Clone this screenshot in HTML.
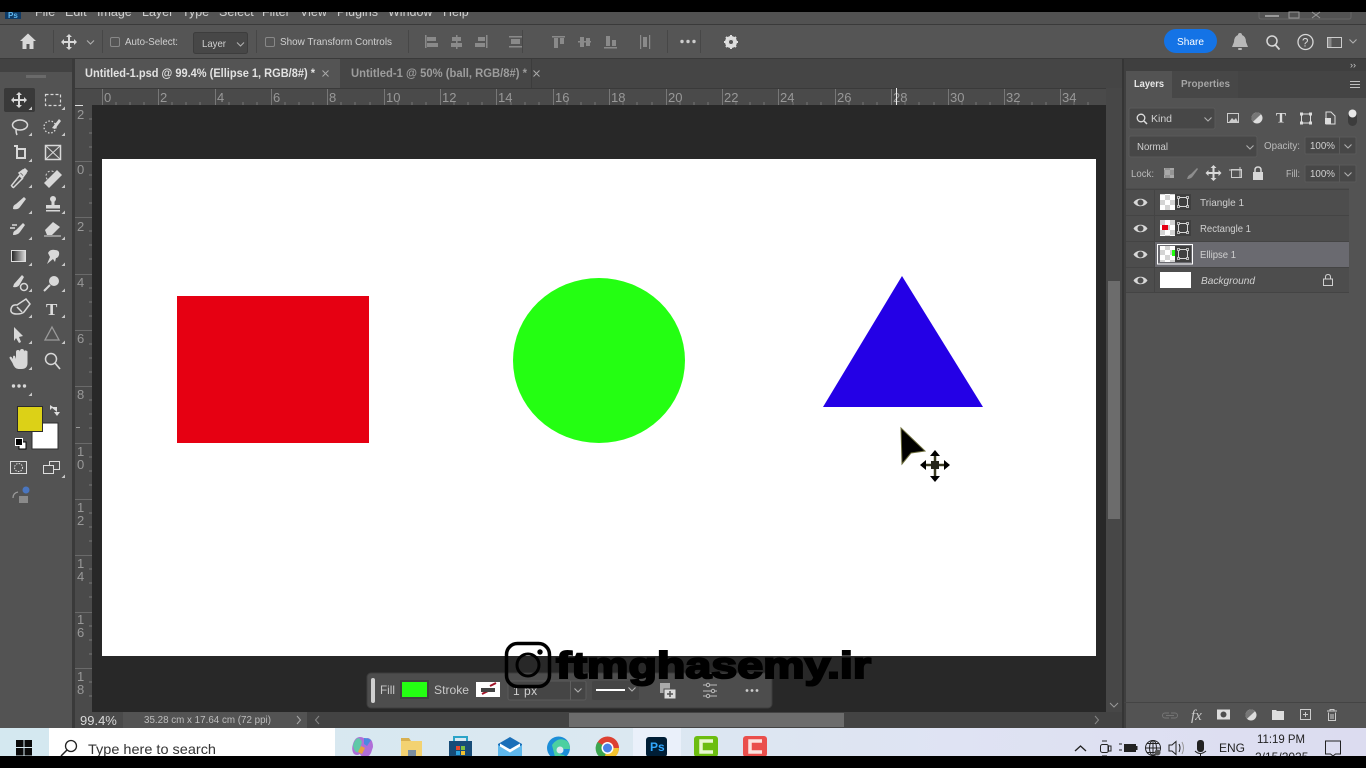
<!DOCTYPE html>
<html>
<head>
<meta charset="utf-8">
<title>Photoshop</title>
<style>
html,body{margin:0;padding:0;width:1366px;height:768px;overflow:hidden;background:#000}
svg{display:block;position:absolute;left:0;top:0}
text{font-family:"Liberation Sans",sans-serif;fill:#d0d0d0;font-size:11px}
.ic{fill:#d8d8d8;stroke:none}
.st{fill:none;stroke:#d8d8d8;stroke-width:1.5}
.dst{fill:none;stroke:#9a9a9a;stroke-width:1.3}
.r{fill:#989898;font-size:13px}
.m{fill:#cfcfcf;font-size:12.5px}
</style>
</head>
<body>
<svg width="1366" height="768" viewBox="0 0 1366 768" xmlns="http://www.w3.org/2000/svg">
<defs>
<linearGradient id="tb" x1="0" x2="1" y1="0" y2="0"><stop offset="0" stop-color="#d4e8f0"/><stop offset=".45" stop-color="#dbe8f1"/><stop offset=".7" stop-color="#dfe3f3"/><stop offset="1" stop-color="#dcdcf0"/></linearGradient>
<pattern id="ck" width="10" height="10" patternUnits="userSpaceOnUse"><rect width="10" height="10" fill="#fff"/><rect width="5" height="5" fill="#d4d4d4"/><rect x="5" y="5" width="5" height="5" fill="#d4d4d4"/></pattern>
<linearGradient id="gr" x1="0" x2="1" y1="0" y2="0"><stop offset="0" stop-color="#222"/><stop offset="1" stop-color="#ddd"/></linearGradient>
<g id="frm"><rect x="0" y="0" width="16" height="16" fill="#3f3f3f"/><rect x="3.500" y="3.500" width="9" height="9" fill="none" stroke="#d8d8d8" stroke-width="1"/><rect x="2.500" y="2.500" width="2" height="2" fill="#3f3f3f" stroke="#d8d8d8" stroke-width=".8"/><rect x="11.500" y="2.500" width="2" height="2" fill="#3f3f3f" stroke="#d8d8d8" stroke-width=".8"/><rect x="2.500" y="11.500" width="2" height="2" fill="#3f3f3f" stroke="#d8d8d8" stroke-width=".8"/><rect x="11.500" y="11.500" width="2" height="2" fill="#3f3f3f" stroke="#d8d8d8" stroke-width=".8"/></g>
<path id="eye" d="M-7 0C-4-5 4-5 7 0C4 5-4 5-7 0Z M0-3A3 3 0 1 0 0 3A3 3 0 1 0 0-3Z" fill="#d8d8d8" fill-rule="evenodd"/>
<path id="mv" d="M0-8l3 3h-2v4h4v-2l3 3-3 3v-2h-4v4h2l-3 3-3-3h2v-4h-4v2l-3-3 3-3v2h4v-4h-2z" fill="#d8d8d8"/>
<path id="cv" d="M-3.500-1.500L0 2L3.500-1.500" fill="none" stroke="#b0b0b0" stroke-width="1.100"/>
<path id="tri" d="M0 0h-3.500l3.500-3.500z" fill="#c8c8c8"/>
</defs>

<rect width="1366" height="768" fill="#535353"/>
<rect width="1366" height="12" fill="#000"/>

<!-- menu bar -->
<rect x="0" y="12" width="1366" height="12" fill="#525252"/>
<rect x="0" y="24" width="1366" height="1.500" fill="#3a3a3a"/>
<rect x="5" y="12" width="16" height="7" fill="#0e3a66"/>
<text x="8" y="18" style="font-size:8px;fill:#5fb8f0;font-weight:bold">Ps</text>
<clipPath id="cpm"><rect x="0" y="12" width="1366" height="12"/></clipPath>
<g clip-path="url(#cpm)">
<text x="35" y="16" class="m">File</text><text x="65" y="16" class="m">Edit</text><text x="97" y="16" class="m">Image</text><text x="142" y="16" class="m">Layer</text><text x="182" y="16" class="m">Type</text><text x="219" y="16" class="m">Select</text><text x="262" y="16" class="m">Filter</text><text x="300" y="16" class="m">View</text><text x="337" y="16" class="m">Plugins</text><text x="388" y="16" class="m">Window</text><text x="443" y="16" class="m">Help</text>
</g>
<rect x="1265" y="15" width="14" height="2" fill="#999"/>
<rect x="1289" y="12" width="10" height="6" fill="none" stroke="#999"/>
<path d="M1312 12l8 6M1320 12l-8 6" stroke="#999" fill="none"/>
<path d="M1259 12v5q0 2 2 2h88q2 0 2-2v-5" fill="none" stroke="#666"/>

<!-- options bar -->
<rect x="0" y="25" width="1366" height="33" fill="#555"/>
<rect x="0" y="58" width="1366" height="1" fill="#3a3a3a"/>
<path d="M28 33.500L36 41h-2.500v8h-4v-5h-3v5h-4v-8H20z" class="ic"/>
<rect x="53" y="30" width="1" height="23" fill="#474747"/>
<use href="#mv" x="69" y="42"/>
<use href="#cv" x="90.500" y="42"/>
<rect x="102" y="30" width="1" height="23" fill="#474747"/>
<rect x="110.500" y="37.500" width="9" height="9" rx="1.500" fill="none" stroke="#888"/>
<text x="125" y="45" style="font-size:10.500px" textLength="53" lengthAdjust="spacingAndGlyphs">Auto-Select:</text>
<rect x="193.500" y="32.500" width="54" height="21" rx="2" fill="#474747" stroke="#3d3d3d"/>
<text x="202" y="47" style="font-size:10.500px" textLength="24" lengthAdjust="spacingAndGlyphs">Layer</text>
<use href="#cv" x="240.500" y="44"/>
<rect x="256" y="30" width="1" height="23" fill="#474747"/>
<rect x="265.500" y="37.500" width="9" height="9" rx="1.500" fill="none" stroke="#888"/>
<text x="280" y="45" style="font-size:10.500px" textLength="112" lengthAdjust="spacingAndGlyphs">Show Transform Controls</text>
<rect x="408" y="30" width="1" height="23" fill="#474747"/>
<g fill="#8a8a8a">
<rect x="425" y="35" width="1.500" height="13"/><rect x="427" y="37" width="9" height="4"/><rect x="427" y="43" width="11" height="4"/>
<rect x="456" y="35" width="1.500" height="14"/><rect x="452" y="37" width="9" height="4"/><rect x="451" y="43" width="11" height="4"/>
<rect x="486" y="35" width="1.500" height="13"/><rect x="478" y="37" width="7" height="4"/><rect x="475" y="43" width="10" height="4"/>
<rect x="509" y="36" width="13" height="1.500"/><rect x="509" y="46" width="13" height="1.500"/><rect x="511" y="39" width="9" height="5"/>
<rect x="552" y="36" width="13" height="1.500"/><rect x="554" y="38" width="4" height="10"/><rect x="560" y="38" width="4" height="6"/>
<rect x="578" y="41" width="13" height="1.500"/><rect x="580" y="37" width="4" height="10"/><rect x="586" y="38" width="4" height="8"/>
<rect x="604" y="47" width="13" height="1.500"/><rect x="606" y="36" width="4" height="10"/><rect x="612" y="40" width="4" height="6"/>
<rect x="640" y="35" width="1.200" height="14"/><rect x="643" y="37" width="4" height="10"/><rect x="649" y="35" width="1.200" height="14"/>
</g>
<rect x="522" y="30" width="1" height="23" fill="#474747"/>
<rect x="667" y="30" width="1" height="23" fill="#474747"/>
<rect x="700" y="30" width="1" height="23" fill="#474747"/>
<circle cx="682" cy="41.500" r="1.700" fill="#ccc"/><circle cx="688" cy="41.500" r="1.700" fill="#ccc"/><circle cx="694" cy="41.500" r="1.700" fill="#ccc"/>
<circle cx="731" cy="42" r="4.500" fill="none" stroke="#ddd" stroke-width="3"/>
<path d="M731 35v14M724 42h14M726 37l10 10M736 37l-10 10" stroke="#ddd" stroke-width="2"/>
<circle cx="731" cy="42" r="2" fill="#555"/>
<rect x="1164" y="29" width="53" height="24" rx="12" fill="#1473e6"/>
<text x="1177" y="45" style="font-size:10.500px;fill:#fff" textLength="27" lengthAdjust="spacingAndGlyphs">Share</text>
<path d="M1240 33q2 0 2 2q4 1.500 4 7l2 5h-16l2-5q0-5.500 4-7q0-2 2-2z" fill="#b8b8b8"/><rect x="1238" y="48" width="4" height="2" rx="1" fill="#b8b8b8"/>
<circle cx="1272" cy="41" r="5" fill="none" stroke="#d8d8d8" stroke-width="1.500"/><path d="M1275.500 45l4 4.500" stroke="#d8d8d8" stroke-width="1.700"/>
<circle cx="1305.500" cy="42" r="7.500" fill="none" stroke="#d8d8d8" stroke-width="1.300"/><text x="1302" y="46.500" style="font-size:11.500px;fill:#ddd">?</text>
<rect x="1327.500" y="37.500" width="14" height="10" fill="none" stroke="#ccc"/><rect x="1328" y="38" width="3.500" height="9" fill="#888"/>
<use href="#cv" x="1353" y="41"/>

<!-- tab row -->
<rect x="0" y="59" width="1124" height="29" fill="#454545"/>
<rect x="0" y="59" width="74" height="13" fill="#3f3f3f"/>
<text x="6" y="68" style="font-size:9px;fill:#bbb">‹‹</text>
<rect x="75" y="59" width="265" height="29" fill="#545454"/>
<text x="85" y="77" style="font-weight:bold;font-size:11.500px;fill:#e2e2e2" textLength="230" lengthAdjust="spacingAndGlyphs">Untitled-1.psd @ 99.4% (Ellipse 1, RGB/8#) *</text>
<path d="M322.500 70.500l6 6M328.500 70.500l-6 6" stroke="#aaa"/>
<rect x="340" y="59" width="191" height="29" fill="#464646"/>
<text x="351" y="77" style="font-weight:bold;font-size:11.500px;fill:#9c9c9c" textLength="176" lengthAdjust="spacingAndGlyphs">Untitled-1 @ 50% (ball, RGB/8#) *</text>
<path d="M533.500 70.500l6 6M539.500 70.500l-6 6" stroke="#aaa"/>
<rect x="531" y="59" width="1" height="29" fill="#3c3c3c"/>

<!-- left toolbar -->
<rect x="0" y="72" width="72" height="656" fill="#535353"/>
<rect x="0" y="59" width="72" height="13" fill="#424242"/>
<rect x="72" y="59" width="3" height="669" fill="#3a3a3a"/>
<rect x="26" y="75" width="20" height="3" fill="#6a6a6a"/>
<rect x="4" y="88" width="31" height="24" rx="2" fill="#393939"/>
<use href="#mv" x="19" y="100"/>
<rect x="45.500" y="94.500" width="15" height="11" fill="none" stroke="#d8d8d8" stroke-dasharray="3 2" stroke-width="1.200"/>
<ellipse cx="20" cy="125" rx="7.500" ry="5" class="st"/><path d="M16 130q0 3 1 5" class="st"/>
<ellipse cx="50" cy="127" rx="6" ry="6" fill="none" stroke="#d8d8d8" stroke-dasharray="1.500 1.800" stroke-width="1.300"/><path d="M52 128l7-9 2 2-6 8z" class="ic"/>
<path d="M14 146h3v12h9M17 149h8v10" fill="none" stroke="#d8d8d8" stroke-width="2"/>
<rect x="45.500" y="145.500" width="15" height="14" class="st"/><path d="M45.500 145.500l15 14M60.500 145.500l-15 14" stroke="#d8d8d8"/>
<path d="M12.500 187l-1-1.500 8-10 3 3-9 9zM19 173l4-3 3 3-3 4z" class="st"/><path d="M20 172l5-4 3 3-4 5z" class="ic"/>
<path d="M44 183l13-13 5 5-13 13z" class="ic"/><circle cx="51" cy="176" r="5" fill="none" stroke="#d8d8d8" stroke-dasharray="2 2"/>
<path d="M13 209q0-4 3-5l8-7 2 2-6 8q-2 3-7 2z" class="ic"/>
<circle cx="53" cy="199" r="3" class="ic"/><rect x="51.500" y="201" width="3" height="4" class="ic"/><rect x="46" y="205" width="14" height="3.500" class="ic"/><rect x="46" y="210" width="14" height="1.500" class="ic"/>
<path d="M13 235q0-4 3-5l7-7 2 2-5 7q-2 3-7 3z" class="ic"/><path d="M10 228h5M12 225h5" stroke="#d8d8d8" stroke-width="1.500"/>
<path d="M45 230l8-8 7 5-8 8h-5z" class="ic"/><path d="M44 236h17" stroke="#d8d8d8"/>
<rect x="11.500" y="250.500" width="14" height="11" fill="url(#gr)" stroke="#ddd"/>
<path d="M47 264l3-7-2-4q2-4 7-3 5 0 4 5-1 3-3 3l-1 4-2-3z" class="ic"/>
<path d="M13 287l1-3 8-9 2 2-4 7q-2 4-7 3z" class="ic"/><circle cx="24" cy="287" r="3.500" class="st"/>
<circle cx="54" cy="281" r="5" class="ic"/><path d="M50 285l-6 6" stroke="#d8d8d8" stroke-width="2"/>
<path d="M17 314q-7 0-6-5t6-4l9-6 4 5-6 8q-2 2-7 2z" class="st"/><path d="M17 307l5 5" class="st"/>
<text x="46" y="315" style="font-family:'Liberation Serif',serif;font-weight:bold;font-size:17px;fill:#ddd">T</text>
<path d="M14 327l9 9-4 1 2 5-2 1-3-5-2 3z" class="ic"/>
<path d="M52 327l7 13H45z" class="dst"/>
<path d="M14 356v-2q0-2 2-1l1 3v-7q0-2 2-2t2 2v5-6q0-2 2-2t2 2v6-5q0-2 2-1.500t1.500 2V360q0 6-6 6h-3q-4 0-6-6l-3-5q0-2 2-1z" class="ic" transform="translate(-1 3)"/>
<circle cx="51" cy="359" r="5.500" class="st"/><path d="M55 363l5 6" stroke="#d8d8d8" stroke-width="1.700"/>
<circle cx="13.500" cy="386" r="1.700" class="ic"/><circle cx="19" cy="386" r="1.700" class="ic"/><circle cx="24.500" cy="386" r="1.700" class="ic"/>
<g>
<use href="#tri" x="32" y="110"/><use href="#tri" x="65" y="110"/><use href="#tri" x="32" y="136"/><use href="#tri" x="65" y="136"/><use href="#tri" x="32" y="162"/><use href="#tri" x="65" y="188"/><use href="#tri" x="32" y="188"/><use href="#tri" x="32" y="214"/><use href="#tri" x="65" y="214"/><use href="#tri" x="32" y="240"/><use href="#tri" x="65" y="240"/><use href="#tri" x="32" y="266"/><use href="#tri" x="65" y="266"/><use href="#tri" x="32" y="292"/><use href="#tri" x="65" y="292"/><use href="#tri" x="32" y="318"/><use href="#tri" x="65" y="318"/><use href="#tri" x="32" y="344"/><use href="#tri" x="65" y="344"/><use href="#tri" x="32" y="370"/><use href="#tri" x="32" y="396"/>
</g>
<rect x="32" y="423" width="26" height="26" fill="#fff" stroke="#2c2c2c"/>
<rect x="17.500" y="406.500" width="25" height="25" fill="#dcd117" stroke="#2c2c2c"/>
<path d="M51 407h6v5M57 416l-3-4h6zM50 405l3 2-3 3z" fill="#ddd" stroke="none"/>
<rect x="19" y="442" width="7" height="7" fill="#fff" stroke="#000"/><rect x="15.500" y="438.500" width="7" height="7" fill="#000" stroke="#fff"/>
<rect x="10.500" y="461.500" width="16" height="12" fill="none" stroke="#ddd"/><circle cx="18.500" cy="467.500" r="4" fill="none" stroke="#ddd" stroke-dasharray="1.500 1.200"/>
<rect x="49.500" y="461.500" width="10" height="8" fill="#535353" stroke="#ddd"/><rect x="43.500" y="465.500" width="10" height="8" fill="#535353" stroke="#ddd"/>
<use href="#tri" x="65" y="478"/>
<circle cx="26" cy="490" r="3.500" fill="#4a76c0"/><path d="M13 498q0-5 5-6" class="dst"/><rect x="19" y="496" width="9" height="7" fill="#8a8a8a"/>

<!-- rulers -->
<rect x="75" y="88" width="1031" height="17" fill="#4a4a4a"/>
<rect x="75" y="88" width="1031" height="1" fill="#3a3a3a"/>
<rect x="75" y="105" width="17" height="607" fill="#4a4a4a"/>
<g fill="#777">
<rect x="102" y="89" width="1" height="16"/><rect x="158" y="89" width="1" height="16"/><rect x="215" y="89" width="1" height="16"/><rect x="271" y="89" width="1" height="16"/><rect x="327" y="89" width="1" height="16"/><rect x="384" y="89" width="1" height="16"/><rect x="440" y="89" width="1" height="16"/><rect x="496" y="89" width="1" height="16"/><rect x="553" y="89" width="1" height="16"/><rect x="609" y="89" width="1" height="16"/><rect x="666" y="89" width="1" height="16"/><rect x="722" y="89" width="1" height="16"/><rect x="778" y="89" width="1" height="16"/><rect x="835" y="89" width="1" height="16"/><rect x="891" y="89" width="1" height="16"/><rect x="948" y="89" width="1" height="16"/><rect x="1004" y="89" width="1" height="16"/><rect x="1060" y="89" width="1" height="16"/>
</g>
<path d="M116 102V105M130 102V105M144 102V105M172 102V105M186 102V105M200 102V105M229 102V105M243 102V105M257 102V105M285 102V105M299 102V105M313 102V105M341 102V105M355 102V105M370 102V105M398 102V105M412 102V105M426 102V105M454 102V105M468 102V105M482 102V105M511 102V105M525 102V105M539 102V105M567 102V105M581 102V105M595 102V105M623 102V105M637 102V105M652 102V105M680 102V105M694 102V105M708 102V105M736 102V105M750 102V105M764 102V105M793 102V105M807 102V105M821 102V105M849 102V105M863 102V105M877 102V105M905 102V105M919 102V105M934 102V105M962 102V105M976 102V105M990 102V105M1018 102V105M1032 102V105M1046 102V105M1074 102V105M1088 102V105" stroke="#777" stroke-width="1"/>
<text x="104" y="102" class="r">0</text><text x="160" y="102" class="r">2</text><text x="217" y="102" class="r">4</text><text x="273" y="102" class="r">6</text><text x="329" y="102" class="r">8</text><text x="386" y="102" class="r">10</text><text x="442" y="102" class="r">12</text><text x="498" y="102" class="r">14</text><text x="555" y="102" class="r">16</text><text x="611" y="102" class="r">18</text><text x="668" y="102" class="r">20</text><text x="724" y="102" class="r">22</text><text x="780" y="102" class="r">24</text><text x="837" y="102" class="r">26</text><text x="893" y="102" class="r">28</text><text x="950" y="102" class="r">30</text><text x="1006" y="102" class="r">32</text><text x="1062" y="102" class="r">34</text>
<rect x="896" y="88" width="1" height="17" fill="#eee"/>
<path d="M1109 99l4-4 4 4" fill="none" stroke="#999"/>
<rect x="75" y="105" width="8" height="1" fill="#ddd"/>
<g fill="#6a6a6a">
<rect x="75" y="161" width="17" height="1"/><rect x="75" y="217" width="17" height="1"/><rect x="75" y="274" width="17" height="1"/><rect x="75" y="330" width="17" height="1"/><rect x="75" y="386" width="17" height="1"/><rect x="75" y="443" width="17" height="1"/><rect x="75" y="499" width="17" height="1"/><rect x="75" y="555" width="17" height="1"/><rect x="75" y="612" width="17" height="1"/><rect x="75" y="668" width="17" height="1"/>
</g>
<path d="M89 119H92M89 133H92M89 147H92M89 175H92M89 189H92M89 203H92M89 231H92M89 245H92M89 259H92M89 288H92M89 302H92M89 316H92M89 344H92M89 358H92M89 372H92M89 400H92M89 414H92M89 428H92M89 457H92M89 471H92M89 485H92M89 513H92M89 527H92M89 541H92M89 569H92M89 583H92M89 597H92M89 626H92M89 640H92M89 654H92M89 682H92M89 696H92" stroke="#777"/>
<text x="77" y="119" class="r">2</text><text x="77" y="174" class="r">0</text><text x="77" y="231" class="r">2</text><text x="77" y="287" class="r">4</text><text x="77" y="343" class="r">6</text><text x="77" y="399" class="r">8</text><text x="77" y="456" class="r">1</text><text x="77" y="469" class="r">0</text><text x="77" y="512" class="r">1</text><text x="77" y="525" class="r">2</text><text x="77" y="568" class="r">1</text><text x="77" y="581" class="r">4</text><text x="77" y="624" class="r">1</text><text x="77" y="637" class="r">6</text><text x="77" y="681" class="r">1</text><text x="77" y="694" class="r">8</text>
<rect x="76" y="427" width="4" height="1" fill="#989898"/>

<!-- canvas -->
<rect x="92" y="105" width="1014" height="607" fill="#282828"/>
<rect x="102" y="159" width="994" height="497" fill="#fff"/>
<rect x="177" y="296" width="192" height="147" fill="#e60012"/>
<ellipse cx="599" cy="360.500" rx="86" ry="82.500" fill="#24ff12"/>
<path d="M902 276L983 407H823Z" fill="#2400e6"/>

<!-- cursor -->
<path d="M901 428L925 451 911 453 902 464Z" fill="#000" stroke="#6b6b3a" stroke-width="1"/>
<path d="M935 452v26M924 465h22" stroke="#3a3a20" stroke-width="2.500"/>
<path d="M935 450l5 6h-10zM935 482l5-6h-10zM920 465l6-5v10zM950 465l-6-5v10z" fill="#000"/>
<rect x="931" y="461" width="8" height="8" fill="#26261a"/>

<!-- right scrollbar -->
<rect x="1106" y="88" width="16" height="624" fill="#474747"/>
<rect x="1108" y="281" width="12" height="238" fill="#6c6c6c"/>
<path d="M1110 703l4 4 4-4" fill="none" stroke="#999"/>
<rect x="1122" y="59" width="2" height="669" fill="#353535"/>

<!-- contextual bar -->
<rect x="367" y="673" width="405" height="35" rx="4" fill="#4d4d4d" stroke="#3d3d3d"/>
<rect x="371" y="678" width="4" height="25" rx="2" fill="#cfcfcf"/>
<text x="380" y="694" style="font-size:12px;fill:#c8c8c8" textLength="15" lengthAdjust="spacingAndGlyphs">Fill</text>
<rect x="400" y="680" width="29" height="19" fill="#404040"/>
<rect x="402" y="682" width="25" height="15" fill="#24ff12"/>
<text x="434" y="694" style="font-size:12px;fill:#c8c8c8" textLength="35" lengthAdjust="spacingAndGlyphs">Stroke</text>
<rect x="476" y="682" width="24" height="15" fill="#fff"/>
<path d="M482 694l6-3M490 686l6-3" stroke="#a01428" stroke-width="2"/><rect x="481" y="688" width="14" height="4" fill="#444"/>
<rect x="508" y="681" width="78" height="19" rx="2" fill="#454545" stroke="#5a5a5a"/>
<text x="513" y="695" style="font-size:12px;fill:#cfcfcf;letter-spacing:.5px">1 px</text>
<rect x="570" y="681" width="1" height="19" fill="#5f5f5f"/>
<use href="#cv" x="578" y="690"/>
<rect x="592" y="681" width="47" height="19" rx="2" fill="#454545"/>
<rect x="596" y="689" width="29" height="2" fill="#fff"/>
<use href="#cv" x="632" y="689"/>
<rect x="660" y="683" width="10" height="10" fill="#aaa"/>
<rect x="664" y="689" width="12" height="10" fill="#ddd" stroke="#4d4d4d"/><path d="M670 691v6M667 694h6" stroke="#555" stroke-width="1.500"/>
<path d="M703 685h14M703 691h14M703 696h14" stroke="#bbb"/><circle cx="708" cy="685" r="1.700" fill="#4d4d4d" stroke="#bbb"/><circle cx="713" cy="691" r="1.700" fill="#4d4d4d" stroke="#bbb"/><circle cx="708" cy="696" r="1.700" fill="#4d4d4d" stroke="#bbb"/>
<circle cx="747" cy="690.500" r="1.400" fill="#ccc"/><circle cx="752" cy="690.500" r="1.400" fill="#ccc"/><circle cx="757" cy="690.500" r="1.400" fill="#ccc"/>

<!-- watermark -->
<rect x="506.500" y="643.500" width="43" height="43" rx="11" fill="none" stroke="#000" stroke-width="3.500"/>
<circle cx="528" cy="665" r="11" fill="none" stroke="#000" stroke-width="3"/>
<circle cx="540" cy="652" r="2.700" fill="#000"/>
<text x="556" y="678" textLength="315" lengthAdjust="spacingAndGlyphs" style="font-weight:bold;font-size:37px;fill:#000;stroke:#000;stroke-width:2px">ftmghasemy.ir</text>

<!-- status bar -->
<rect x="75" y="712" width="232" height="16" fill="#535353"/>
<rect x="75" y="712" width="48" height="16" fill="#4a4a4a"/>
<text x="80" y="725" style="font-size:13px;fill:#d8d8d8">99.4%</text>
<text x="144" y="723" style="font-size:10px;fill:#bdbdbd" textLength="127" lengthAdjust="spacingAndGlyphs">35.28 cm x 17.64 cm (72 ppi)</text>
<path d="M297 716l3.500 4-3.500 4" fill="none" stroke="#aaa"/>
<rect x="307" y="712" width="815" height="16" fill="#434343"/>
<path d="M319 716l-3.500 4 3.500 4" fill="none" stroke="#888"/>
<rect x="569" y="713" width="275" height="14" fill="#6c6c6c"/>
<path d="M1095 716l3.500 4-3.500 4" fill="none" stroke="#888"/>

<!-- right panel -->
<rect x="1124" y="59" width="242" height="669" fill="#535353"/>
<rect x="1124" y="59" width="242" height="12" fill="#3f3f3f"/>
<rect x="1124" y="71" width="242" height="27" fill="#444"/>
<text x="1350" y="68" style="font-size:9px;fill:#ccc">››</text>
<rect x="1172" y="71" width="66" height="27" fill="#474747"/>
<rect x="1126" y="71" width="46" height="27" fill="#535353"/>
<text x="1134" y="87" style="font-weight:bold;font-size:10.500px;fill:#e8e8e8" textLength="30" lengthAdjust="spacingAndGlyphs">Layers</text>
<text x="1181" y="87" style="font-weight:bold;font-size:10.500px;fill:#a5a5a5" textLength="49" lengthAdjust="spacingAndGlyphs">Properties</text>
<path d="M1350 81.500h10M1350 84.500h10M1350 87.500h10" stroke="#c0c0c0"/>
<rect x="1124" y="71" width="2" height="657" fill="#3f3f3f"/>
<!-- filter row -->
<rect x="1129" y="108" width="86" height="21" rx="2" fill="#474747" stroke="#5a5a5a"/>
<circle cx="1141" cy="118" r="3.800" fill="none" stroke="#ddd" stroke-width="1.300"/><path d="M1144 121l3 3" stroke="#ddd" stroke-width="1.500"/>
<text x="1151" y="122" style="font-size:10.500px">Kind</text>
<use href="#cv" x="1208" y="119"/>
<rect x="1227.500" y="113.500" width="11" height="9" fill="none" stroke="#ccc"/><path d="M1229 122l3-4 2 2 2-2 2 4z" fill="#ccc"/>
<circle cx="1257" cy="118" r="5.500" fill="#ddd"/><path d="M1261 114.200A5.500 5.500 0 0 0 1253 121.800Z" fill="#777"/>
<text x="1276" y="122.500" style="font-family:'Liberation Serif',serif;font-weight:bold;font-size:15px;fill:#ddd">T</text>
<rect x="1301.500" y="114" width="9" height="9" fill="none" stroke="#ddd"/>
<rect x="1300" y="112.500" width="3" height="3" fill="#ddd"/><rect x="1309" y="112.500" width="3" height="3" fill="#ddd"/><rect x="1300" y="121.500" width="3" height="3" fill="#ddd"/><rect x="1309" y="121.500" width="3" height="3" fill="#ddd"/>
<path d="M1326 112h5l4 4v8h-9z" fill="none" stroke="#ddd"/><rect x="1325" y="118" width="6" height="6" fill="#ddd"/>
<rect x="1348" y="110" width="9" height="16" rx="4.500" fill="#3c3c3c"/><circle cx="1352.500" cy="113.500" r="4" fill="#e8e8e8"/>
<!-- blend row -->
<rect x="1129" y="136" width="128" height="21" rx="2" fill="#474747" stroke="#5a5a5a"/>
<text x="1137" y="150" style="font-size:10.500px" textLength="31" lengthAdjust="spacingAndGlyphs">Normal</text>
<use href="#cv" x="1250" y="147"/>
<text x="1264" y="149" style="font-size:10.500px;fill:#bbb" textLength="36" lengthAdjust="spacingAndGlyphs">Opacity:</text>
<rect x="1305" y="137" width="51" height="17" rx="1" fill="#474747" stroke="#5a5a5a"/>
<rect x="1339" y="137" width="1" height="17" fill="#5a5a5a"/>
<text x="1310" y="149" style="font-size:10.500px" textLength="25" lengthAdjust="spacingAndGlyphs">100%</text>
<use href="#cv" x="1348" y="146"/>
<!-- lock row -->
<text x="1131" y="177" style="font-size:10.500px;fill:#bbb" textLength="23" lengthAdjust="spacingAndGlyphs">Lock:</text>
<rect x="1164" y="168" width="10" height="10" fill="url(#ck)" opacity=".5"/>
<path d="M1187 179q1-4 4-5l6-6 1 1-5 7q-2 3-6 3z" fill="#8d8d8d"/>
<use href="#mv" x="1213.500" y="173"/>
<rect x="1231.500" y="169.500" width="10" height="8" fill="none" stroke="#ccc"/><path d="M1229 170h12M1240 167v11" stroke="#ccc"/>
<rect x="1253" y="172" width="10" height="8" fill="#d8d8d8"/><path d="M1255 172v-2q0-3 3-3t3 3v2" fill="none" stroke="#d8d8d8" stroke-width="1.500"/>
<text x="1286" y="177" style="font-size:10.500px;fill:#bbb" textLength="14" lengthAdjust="spacingAndGlyphs">Fill:</text>
<rect x="1305" y="165" width="51" height="17" rx="1" fill="#474747" stroke="#5a5a5a"/>
<rect x="1339" y="165" width="1" height="17" fill="#5a5a5a"/>
<text x="1310" y="177" style="font-size:10.500px" textLength="25" lengthAdjust="spacingAndGlyphs">100%</text>
<use href="#cv" x="1348" y="174"/>
<!-- layers -->
<rect x="1126" y="188" width="223" height="104" fill="#4d4d4d"/>
<rect x="1126" y="189" width="223" height="1" fill="#444"/>
<rect x="1126" y="215" width="223" height="1" fill="#444"/>
<rect x="1155" y="241" width="194" height="26" fill="#6a6a70"/>
<rect x="1126" y="241" width="223" height="1" fill="#444"/>
<rect x="1126" y="267" width="223" height="1" fill="#444"/>
<rect x="1126" y="292" width="223" height="1" fill="#444"/>
<rect x="1154" y="189" width="1" height="104" fill="#444"/>
<use href="#eye" x="1140.500" y="202.500"/><use href="#eye" x="1140.500" y="228.500"/><use href="#eye" x="1140.500" y="254.500"/><use href="#eye" x="1140.500" y="280.500"/>
<rect x="1160" y="194" width="16" height="16" fill="url(#ck)"/><use href="#frm" x="1175" y="194"/>
<rect x="1160" y="220" width="16" height="16" fill="url(#ck)"/><rect x="1162" y="225" width="6" height="5" fill="#e60012"/><use href="#frm" x="1175" y="220"/>
<rect x="1157.500" y="244.500" width="35" height="19.500" fill="none" stroke="#fff"/>
<rect x="1160" y="246" width="16" height="16" fill="url(#ck)"/><rect x="1172" y="250" width="3" height="6" fill="#24ff12"/><use href="#frm" x="1175" y="246"/>
<rect x="1160" y="272" width="31" height="16" fill="#fff"/>
<text x="1200" y="206" style="font-size:10.500px" textLength="44" lengthAdjust="spacingAndGlyphs">Triangle 1</text>
<text x="1200" y="232" style="font-size:10.500px" textLength="51" lengthAdjust="spacingAndGlyphs">Rectangle 1</text>
<text x="1200" y="258" style="font-size:10.500px" textLength="36" lengthAdjust="spacingAndGlyphs">Ellipse 1</text>
<text x="1201" y="284" style="font-size:10.500px;font-style:italic" textLength="54" lengthAdjust="spacingAndGlyphs">Background</text>
<rect x="1323.500" y="279" width="9" height="6.500" fill="none" stroke="#d0d0d0"/><path d="M1325.500 279v-2q0-2.500 2.500-2.500t2.500 2.500v2" fill="none" stroke="#d0d0d0"/>
<!-- bottom panel icons -->
<rect x="1124" y="702" width="242" height="1" fill="#444"/>
<path d="M1169 713h-4a2.500 2.500 0 0 0 0 5h4M1171 713h4a2.500 2.500 0 0 1 0 5h-4M1166 715.500h8" fill="none" stroke="#757575"/>
<text x="1191" y="720" style="font-family:'Liberation Serif',serif;font-style:italic;font-size:15px;fill:#c8c8c8">fx</text>
<rect x="1217" y="709.500" width="13" height="10" fill="#ddd"/><circle cx="1223.500" cy="714.500" r="3" fill="#4f4f4f"/>
<circle cx="1251" cy="715" r="5.500" fill="#ddd"/><path d="M1255 711.200A5.500 5.500 0 0 0 1247 718.800Z" fill="#777"/>
<path d="M1272 710h4l1 1h7v9h-12z" fill="#ddd"/>
<rect x="1300.500" y="709.500" width="10" height="10" fill="none" stroke="#ccc"/><path d="M1305.500 712v5M1303 714.500h5" stroke="#ccc"/>
<path d="M1327 711h10M1330 711v-1.500h4V711M1328.500 712.500v8h7v-8M1331 714v5M1333 714v5" fill="none" stroke="#ccc"/>

<!-- taskbar -->
<rect x="0" y="728" width="1366" height="28" fill="url(#tb)"/>
<g fill="#0a0a0a"><rect x="16" y="740" width="7.500" height="7"/><rect x="24.500" y="740" width="7.500" height="7"/><rect x="16" y="748" width="7.500" height="7.500"/><rect x="24.500" y="748" width="7.500" height="7.500"/></g>
<rect x="49" y="728" width="286" height="28" fill="#fff"/>
<circle cx="71" cy="746" r="5.500" fill="none" stroke="#222" stroke-width="1.300"/><path d="M67 750l-6 6" stroke="#222" stroke-width="1.500"/>
<text x="88" y="754" style="font-size:14px;fill:#333" textLength="128" lengthAdjust="spacingAndGlyphs">Type here to search</text>
<clipPath id="tbc"><rect x="340" y="728" width="1026" height="28"/></clipPath>
<g clip-path="url(#tbc)">
<path d="M353 744q2-7 7-7 3 0 5 2 3-2 5 0 3 2 3 8l-2 6q-2 4-6 4-4 0-5-3-3 2-6 0-3-4-1-10z" fill="#b06ed8"/><path d="M353 746q1-6 5-8 2 0 4 4l-3 10q-4 2-6-6z" fill="#5fc8a8"/><path d="M358 752l3-6 4 2-3 6z" fill="#e8a040"/><path d="M364 738q4 0 7 2l-4 6-3-2z" fill="#4a8ae0"/>
<rect x="401" y="741" width="21" height="15" fill="#f3d271"/><path d="M401 741v-3h8l2 3z" fill="#d8b050"/><rect x="408" y="750" width="8" height="6" fill="#7a8ea0"/>
<rect x="449" y="741" width="23" height="16" fill="#174c78"/><path d="M454 741v-4h13v4" fill="none" stroke="#2ba4c8" stroke-width="2"/><rect x="456" y="746" width="4" height="4" fill="#e8482c"/><rect x="461" y="746" width="4" height="4" fill="#7dc040"/><rect x="456" y="751" width="4" height="4" fill="#2ba4e0"/><rect x="461" y="751" width="4" height="4" fill="#f0c030"/>
<path d="M498 744l12-7 12 7v13h-24z" fill="#1a6fb8"/><path d="M498 745l12 7 12-7v12h-24z" fill="#5fb8ec"/><path d="M500 743.500l10 5.800 10-5.800v3l-10 6-10-6z" fill="#fff"/>
<circle cx="558.500" cy="748" r="11.500" fill="#1c8ed8"/><path d="M552 745q6-9 15-4 3 3 3 8h-11q-2 0-2 2 2 4 8 4-4 4-10 2" fill="#4cd0a0"/><circle cx="560" cy="750" r="3.500" fill="#dce8f2"/>
<circle cx="607.500" cy="748" r="11.500" fill="#dd4132"/><path d="M607.500 748L597.500 742a11.500 11.500 0 0 0 7 17.500z" fill="#3ca550"/><path d="M607.500 748h11.500a11.500 11.500 0 0 1-15 11z" fill="#f4c430"/><circle cx="607.500" cy="748" r="6" fill="#fff"/><circle cx="607.500" cy="748" r="4.500" fill="#4a82e8"/>
<rect x="633" y="728" width="48" height="28" fill="#eaf0fa"/>
<rect x="646" y="737" width="21" height="20" rx="3" fill="#001e36"/>
<text x="650" y="751" style="font-size:12px;font-weight:bold;fill:#31a8ff">Ps</text>
<rect x="694" y="736" width="24" height="21" rx="3" fill="#6cbd10"/><path d="M713 741h-12v11h12" fill="none" stroke="#e8f8d0" stroke-width="3.500"/>
<rect x="743" y="736" width="24" height="21" rx="3" fill="#ea4f4c"/><path d="M762 741h-12v11h12" fill="none" stroke="#fbe4e0" stroke-width="3.500"/>
</g>
<path d="M1075 751l5.500-5 5.500 5" fill="none" stroke="#222" stroke-width="1.300"/>
<rect x="1100.500" y="744.500" width="8" height="8" rx="2" fill="none" stroke="#222"/><path d="M1102 741h5M1102 756h5" stroke="#222"/><rect x="1108" y="746" width="3" height="5" fill="none" stroke="#222"/>
<rect x="1124" y="744" width="12" height="8" fill="#222"/><path d="M1122 744h-3M1122 750h-3" stroke="#222"/><rect x="1136" y="746" width="1.500" height="4" fill="#222"/>
<circle cx="1153" cy="748" r="7.500" fill="none" stroke="#222"/><path d="M1145.500 748h15M1153 740.500v15M1147 743.500h12M1147 752.500h12" stroke="#222" fill="none"/><ellipse cx="1153" cy="748" rx="3.500" ry="7.500" fill="none" stroke="#222"/><circle cx="1157.500" cy="752.500" r="3" fill="#555"/>
<path d="M1169 745h3l4-3.500v13l-4-3.500h-3z" fill="none" stroke="#222"/><path d="M1179 744q2 4 0 8" fill="none" stroke="#222"/><path d="M1182 742q3 6 0 12" fill="none" stroke="#999"/>
<rect x="1197" y="740" width="7" height="12" rx="3" fill="#222"/><path d="M1195 751q5 5 11 0M1200.500 754v2" stroke="#222" fill="none"/>
<text x="1219" y="752" style="font-size:12px;fill:#222">ENG</text>
<text x="1257" y="743" style="font-size:12px;fill:#222" textLength="48" lengthAdjust="spacingAndGlyphs">11:19 PM</text>
<text x="1255" y="761" style="font-size:12px;fill:#222">2/15/2025</text>
<path d="M1325.500 741h15v13h-5l-2.500 2-2.500-2h-5z" fill="none" stroke="#222"/>

<rect x="0" y="756" width="1366" height="12" fill="#000"/>
</svg>
</body>
</html>
